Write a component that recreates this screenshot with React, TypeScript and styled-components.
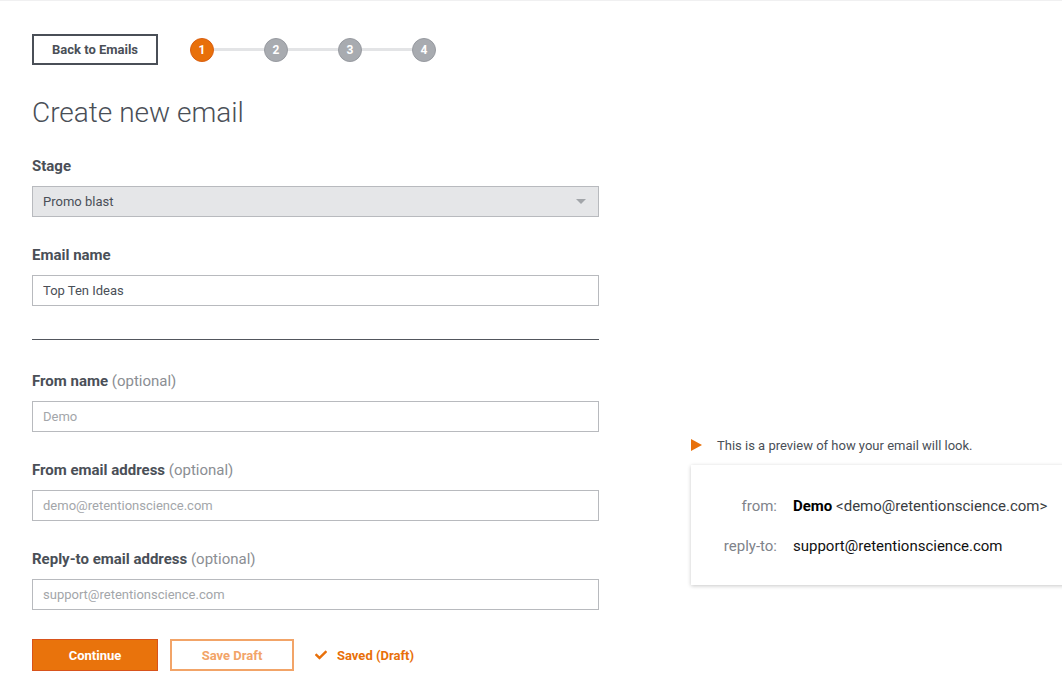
import styled, { createGlobalStyle } from 'styled-components';
import { FaCheck } from 'react-icons/fa';

const GlobalStyle = createGlobalStyle`
  html, body {
    margin: 0;
    padding: 0;
    background: #fff;
    overflow: hidden;
  }
  body {
    font-family: Roboto, 'Liberation Sans', sans-serif;
    color: #4a4f57;
    border-top: 1px solid #f0f0f1;
  }
`;

const steps = [1, 2, 3, 4];

const fields = [
  { label: 'From name', placeholder: 'Demo' },
  { label: 'From email address', placeholder: 'demo@retentionscience.com' },
  { label: 'Reply-to email address', placeholder: 'support@retentionscience.com' },
];

function App() {
  return (
    <Page>
      <GlobalStyle />
      <Header>
        <OutlineButton>Back to Emails</OutlineButton>
        <Steps>
          {steps.map((n, i) => (
            <Step key={n}>
              {i > 0 && <StepLine />}
              <StepDot $active={n === 1}>{n}</StepDot>
            </Step>
          ))}
        </Steps>
      </Header>

      <Body>
        <Form>
          <Title>Create new email</Title>

          <Field>
            <Label>Stage</Label>
            <Select>
              <span>Promo blast</span>
              <Caret />
            </Select>
          </Field>

          <Field>
            <Label>Email name</Label>
            <Input defaultValue="Top Ten Ideas" />
          </Field>

          <Divider />

          {fields.map((f) => (
            <Field key={f.label}>
              <Label>
                {f.label} <Optional>(optional)</Optional>
              </Label>
              <Input placeholder={f.placeholder} />
            </Field>
          ))}

          <Actions>
            <PrimaryButton>Continue</PrimaryButton>
            <DraftButton>Save Draft</DraftButton>
            <Saved>
              <FaCheck size={12} />
              Saved (Draft)
            </Saved>
          </Actions>
        </Form>

        <Preview>
          <PreviewNote>
            <Triangle />
            This is a preview of how your email will look.
          </PreviewNote>
          <Card>
            <CardKey>from:</CardKey>
            <CardValue>
              <strong>Demo</strong> <Muted>&lt;demo@retentionscience.com&gt;</Muted>
            </CardValue>
            <CardKey>reply-to:</CardKey>
            <CardValue>support@retentionscience.com</CardValue>
          </Card>
        </Preview>
      </Body>
    </Page>
  );
}

const Page = styled.div`
  padding: 33px 0 0 32px;
`;

const Header = styled.div`
  display: flex;
  align-items: center;
  gap: 32px;
`;

const OutlineButton = styled.button`
  width: 126px;
  height: 31px;
  border: 2px solid #4a4f57;
  background: #fff;
  color: #4a4f57;
  font-family: Roboto, sans-serif;
  font-weight: 700;
  font-size: 13px;
  padding: 0;
`;

const Steps = styled.div`
  display: flex;
  align-items: center;
`;

const Step = styled.div`
  display: flex;
  align-items: center;
`;

const StepLine = styled.div`
  width: 50px;
  height: 3px;
  background: #e3e4e6;
`;

const StepDot = styled.div<{ $active?: boolean }>`
  width: 24px;
  height: 24px;
  box-sizing: border-box;
  border-radius: 50%;
  display: flex;
  align-items: center;
  justify-content: center;
  font-size: 12px;
  font-weight: 700;
  color: #fff;
  background: ${(p) => (p.$active ? '#e8700a' : '#a8abb0')};
  border: 1px solid ${(p) => (p.$active ? '#d95f12' : '#979aa0')};
`;

const Body = styled.div`
  display: flex;
  gap: 92px;
`;

const Form = styled.div`
  width: 567px;
  flex-shrink: 0;
`;

const Title = styled.h1`
  margin: 31px 0 26px;
  font-size: 28px;
  line-height: 34px;
  font-weight: 300;
  color: #4a4f57;
`;

const Field = styled.div`
  margin-bottom: 28px;
`;

const Label = styled.div`
  font-size: 15px;
  line-height: 20px;
  font-weight: 700;
  color: #4a4f57;
  margin-bottom: 10px;
`;

const Optional = styled.span`
  font-weight: 400;
  color: #8b8e93;
`;

const boxBase = `
  box-sizing: border-box;
  width: 100%;
  height: 31px;
  border: 1px solid #b8babe;
  padding: 0 10px;
  font-family: Roboto, sans-serif;
  font-size: 13px;
`;

const Select = styled.div`
  ${boxBase}
  background: #e5e6e8;
  color: #4a4f57;
  display: flex;
  align-items: center;
  justify-content: space-between;
  padding-right: 12px;
`;

const Caret = styled.span`
  width: 0;
  height: 0;
  border-left: 5px solid transparent;
  border-right: 5px solid transparent;
  border-top: 5px solid #a2a5a9;
`;

const Input = styled.input`
  ${boxBase}
  display: block;
  background: #fff;
  color: #4a4f57;
  outline: none;
  &::placeholder {
    color: #a3a6aa;
  }
`;

const Divider = styled.hr`
  border: 0;
  border-top: 1px solid #52565d;
  margin: 33px 0 31px;
`;

const Actions = styled.div`
  display: flex;
  align-items: center;
  gap: 12px;
  margin-top: 29px;
`;

const PrimaryButton = styled.button`
  width: 126px;
  height: 32px;
  background: #e9730c;
  border: 1px solid #d8531b;
  color: #fff;
  font-family: Roboto, sans-serif;
  font-weight: 700;
  font-size: 13px;
`;

const DraftButton = styled.button`
  width: 124px;
  height: 32px;
  background: #fff;
  border: 2px solid #f2a468;
  color: #f2a468;
  font-family: Roboto, sans-serif;
  font-weight: 700;
  font-size: 13px;
`;

const Saved = styled.span`
  display: flex;
  align-items: center;
  gap: 10px;
  margin-left: 9px;
  color: #e8700a;
  font-size: 13px;
  font-weight: 700;
`;

const Preview = styled.div`
  flex: 1;
  padding-top: 372px;
`;

const PreviewNote = styled.div`
  display: flex;
  align-items: center;
  gap: 15px;
  font-size: 13px;
  color: #4a4f57;
  height: 16px;
  margin-bottom: 12px;
`;

const Triangle = styled.span`
  width: 0;
  height: 0;
  border-top: 6px solid transparent;
  border-bottom: 6px solid transparent;
  border-left: 11px solid #e8700a;
`;

const Card = styled.div`
  width: 420px;
  box-sizing: border-box;
  display: grid;
  grid-template-columns: 57px auto;
  column-gap: 16px;
  row-gap: 18px;
  padding: 30px 0 28px 29px;
  background: #fff;
  box-shadow: 0 1px 4px rgba(0, 0, 0, 0.22);
  font-size: 15px;
  line-height: 22px;
`;

const CardKey = styled.div`
  text-align: right;
  color: #80838a;
  white-space: nowrap;
`;

const CardValue = styled.div`
  color: #111;
  white-space: nowrap;
  strong {
    font-weight: 700;
    color: #000;
  }
`;

const Muted = styled.span`
  color: #3a3d42;
  font-size: 15px;
`;

export default App;
